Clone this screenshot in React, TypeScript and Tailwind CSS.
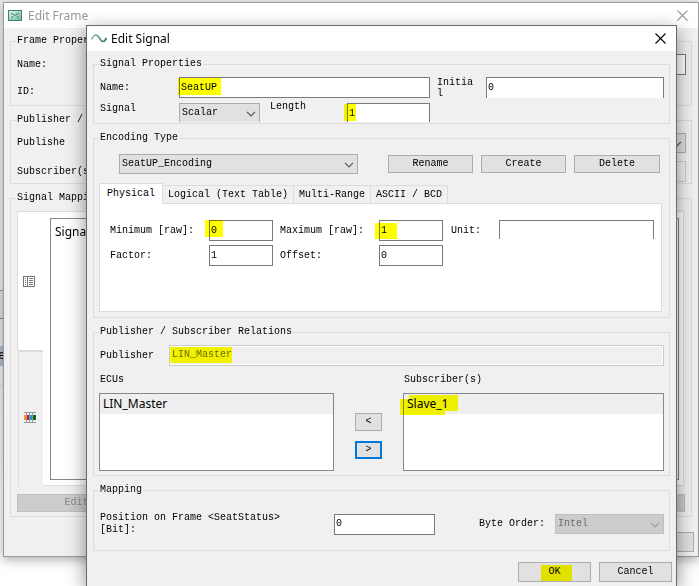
import type { ReactNode } from "react"
import clsx from "clsx"

const inputCls = "block w-full h-[21px] bg-white border border-[#7a7a7a] px-px pb-px outline-none rounded-none"
const buttonCls = "bg-[#e1e1e1] border border-[#adadad] text-center"
const uiFont = "font-['Noto_Sans',sans-serif] text-[12px]"

function Mark({ className }: { className: string }) {
  return <span className={clsx("absolute bg-[#ffff00] mix-blend-multiply pointer-events-none", className)} />
}

function CloseIcon() {
  return (
    <svg className="w-[11px] h-[11px]" viewBox="0 0 11 11" fill="none" stroke="currentColor" strokeWidth="1.1">
      <path d="M.5 .5l10 10M10.5 .5l-10 10" />
    </svg>
  )
}

function FrameIcon() {
  return (
    <svg className="w-[14px] h-[11px]" viewBox="0 0 14 11" fill="none">
      <defs>
        <linearGradient id="env" x1="0" y1="0" x2="1" y2="1">
          <stop offset="0" stopColor="#e2f6ea" />
          <stop offset="1" stopColor="#6fb89c" />
        </linearGradient>
      </defs>
      <rect x=".5" y=".5" width="13" height="10" fill="url(#env)" stroke="#3f8070" />
      <path d="M3 3l4 2.500 4-2.500M3 8.500l2-2.500M11 8.500l-2-2.500" stroke="#3c7a68" strokeWidth=".9" />
    </svg>
  )
}

function SignalIcon() {
  return (
    <svg className="w-4 h-[9px]" viewBox="0 0 16 9" fill="none">
      <defs>
        <linearGradient id="wave" x1="0" y1="0" x2="1" y2="0">
          <stop offset="0" stopColor="#86c5a2" />
          <stop offset="1" stopColor="#2f7468" />
        </linearGradient>
      </defs>
      <path d="M.5 5.500C2 2.500 3.500 1 5 1c3 0 4 6.500 7 6.500 1.500 0 2.500-1.500 3.500-3.500" stroke="url(#wave)" strokeWidth="1.700" />
    </svg>
  )
}

function TableIcon() {
  return (
    <svg className="w-3 h-[11px]" viewBox="0 0 12 11" fill="none" stroke="#777">
      <rect x=".5" y=".5" width="11" height="10" />
      <path d="M4.500 1v9" />
      <path d="M2 2.500h1M2 4.500h1M2 6.500h1M2 8.500h1M6 2.500h4M6 4.500h4M6 6.500h4M6 8.500h4" />
    </svg>
  )
}

function BitsIcon() {
  return (
    <svg className="w-3 h-[11px]" viewBox="0 0 12 11">
      <path d="M0 3h2v5H0z" fill="#f59a22" />
      <path d="M3 3h2v5H3z" fill="#d8102c" />
      <path d="M6 3h2v5H6z" fill="#1597d4" />
      <path d="M9 3h3v5H9z" fill="#0b6b12" />
      <path d="M0 .5h12M0 10.500h12M2.500 1v9M5.500 1v9M8.500 1v9" stroke="#999" />
    </svg>
  )
}

function Group({ title, className, children }: { title: string; className?: string; children: ReactNode }) {
  return (
    <fieldset className="border border-[#dcdcdc] px-[5px] min-w-0">
      <legend className="px-px leading-[14px]">{title}</legend>
      <div className={className}>{children}</div>
    </fieldset>
  )
}

function Combo({ id, value, disabled, className }: { id: string; value: string; disabled?: boolean; className?: string }) {
  return (
    <div className={clsx("relative", className)}>
      <select
        id={id}
        aria-label={id}
        disabled={disabled}
        className={clsx(
          "block appearance-none w-full h-[20px] border pl-[2px] pr-5 rounded-none opacity-100 outline-none",
          disabled ? "bg-[#cccccc] border-[#bfbfbf] text-[#6d6d6d]" : "bg-[#e1e1e1] border-[#adadad] text-black",
        )}
      >
        <option>{value}</option>
      </select>
      <svg className="absolute right-1 top-2 w-[10px] h-[6px] pointer-events-none" viewBox="0 0 10 6" fill="none">
        <path d="M1 .8l4 4 4-4" stroke={disabled ? "#a0a0a0" : "#555"} strokeWidth="1.200" />
      </svg>
    </div>
  )
}

function TitleBar({ title, icon, active }: { title: string; icon: ReactNode; active?: boolean }) {
  return (
    <div className={clsx("h-[25px] flex items-center bg-white pl-1 pr-[10px]", active ? "text-black" : "text-[#999]")}>
      <span className="w-5 flex shrink-0">{icon}</span>
      <h1 className={clsx(uiFont, "flex-1 leading-[16px]")}>{title}</h1>
      <button aria-label="Close">
        <CloseIcon />
      </button>
    </div>
  )
}

function ListBox({ label, item, children }: { label: string; item: string; children?: ReactNode }) {
  return (
    <ul aria-label={label} role="listbox" className="relative h-[78px] bg-white border border-[#828790]">
      <li role="option" aria-selected="true" className={clsx(uiFont, "h-5 bg-[#efefef] pl-[3px] leading-[20px]")}>
        {item}
      </li>
      {children}
    </ul>
  )
}

function Desktop() {
  return (
    <div className="absolute inset-0 flex flex-col bg-white">
      <div className="h-[291px] bg-[#ebebeb] border-b border-[#999]" />
      <div className="h-[27px] bg-[#dedede]" />
      <div className="h-7 bg-[#e4e4e4] border-t border-[#8a8a8a]" />
      <div className={clsx(uiFont, "h-5 bg-[#b0bccb] leading-[18px]")}>
        <span className="flex justify-end w-[5px]">e</span>
      </div>
      <div className="h-5 bg-[#eeeeee] border-b border-[#d4d4d4]" />
      <div className="flex-1 bg-gradient-to-b from-[#eeeeee] to-white" />
    </div>
  )
}

function EditFrame() {
  return (
    <section className="absolute left-[3px] right-0 top-[2px] bg-[#f0f0f0] border border-[#999] shadow-[0_3px_10px_rgba(0,0,0,0.3)]">
      <TitleBar title="Edit Frame" icon={<FrameIcon />} />
      <div className="flex flex-col gap-[7px] px-[6px] pt-[6px]">
        <Group title="Frame Properties" className="flex flex-col gap-[6px] pt-[6px] pb-[3px]">
          <div className="grid grid-cols-[80px_1fr] items-center">
            <label htmlFor="frame-name" className="pl-px">Name:</label>
            <input id="frame-name" className={inputCls} />
          </div>
          <p className="pl-px leading-[21px]">ID:</p>
        </Group>
        <Group title="Publisher / Subscriber" className="flex flex-col gap-2 pt-[6px] pb-px">
          <div className="grid grid-cols-[80px_1fr] items-center">
            <label htmlFor="frame-publisher" className="pl-px">Publishe</label>
            <Combo id="frame-publisher" value="" />
          </div>
          <div className="grid grid-cols-[80px_1fr] items-center">
            <label htmlFor="frame-subscribers" className="pl-px">Subscriber(s)</label>
            <input id="frame-subscribers" disabled className="block w-full h-[21px] bg-[#f0f0f0] border border-[#cccccc]" />
          </div>
        </Group>
        <Group title="Signal Mapping" className="pt-[6px] pb-1">
          <div className="flex h-[275px] pl-px pr-[2px]">
            <div role="tablist" className="w-[26px] flex flex-col">
              <button role="tab" aria-label="Table" className="h-[140px] bg-white border border-r-0 border-[#dcdcdc] flex items-center pl-[5px]">
                <TableIcon />
              </button>
              <button role="tab" aria-label="Layout" className="flex-1 ml-px border-l border-t border-[#dcdcdc] flex items-center pl-[5px] pb-1">
                <BitsIcon />
              </button>
            </div>
            <div className="flex-1 bg-white border border-l-0 border-[#dcdcdc] pt-[6px] pb-[5px] pl-[7px] pr-1">
              <div className={clsx(uiFont, "h-full border border-[#828790] pl-1 pt-1 leading-[18px]")}>Signal</div>
            </div>
          </div>
          <div className="grid grid-cols-4 gap-2 pt-2 pl-px pr-px text-[#8a8a8a]">
            <button disabled className="h-[18px] bg-[#cccccc] border border-[#bfbfbf]">Edit Signal</button>
            <button disabled aria-label="Add" className="h-[18px] bg-[#cccccc] border border-[#bfbfbf]" />
            <button disabled aria-label="Remove" className="h-[18px] bg-[#cccccc] border border-[#bfbfbf]" />
            <button disabled aria-label="Clear" className="h-[18px] bg-[#cccccc] border border-[#bfbfbf]" />
          </div>
        </Group>
      </div>
      <div className="flex justify-end pt-[15px] pb-1 pr-1">
        <button aria-label="Cancel" className={clsx(buttonCls, "w-[73px] h-[20px]")} />
      </div>
    </section>
  )
}

function SignalProperties() {
  return (
    <Group title="Signal Properties" className="grid grid-cols-[80px_minmax(0,251fr)_56px_minmax(0,178fr)] grid-rows-[21px_19px] gap-y-[5px] pt-[6px] pb-px">
      <label htmlFor="name" className="self-center pl-px">Name:</label>
      <div className="relative">
        <input id="name" defaultValue="SeatUP" className={inputCls} />
        <Mark className="-left-px top-px w-[43px] h-[17px]" />
      </div>
      <label htmlFor="initial" className="w-[46px] pl-[7px] leading-[11px] break-all self-center">Initial</label>
      <input id="initial" defaultValue="0" className={clsx(inputCls, "border-b-0")} />

      <label htmlFor="signal-type" className="pl-px">Signal</label>
      <div className="flex">
        <div className="w-[81px] h-[19px] overflow-hidden">
          <Combo id="signal-type" value="Scalar" />
        </div>
        <label htmlFor="length" className="flex-1 pl-[10px] leading-[8px]">Length</label>
        <div className="relative w-[83px]">
          <div className="h-[19px] overflow-hidden">
            <input id="length" defaultValue="1" className={inputCls} />
          </div>
          <Mark className="-left-[3px] top-px w-3 h-[17px]" />
        </div>
      </div>
    </Group>
  )
}

function EncodingType() {
  const tabs = ["Logical (Text Table)", "Multi-Range", "ASCII / BCD"]

  return (
    <Group title="Encoding Type" className="pt-[9px] pb-[5px]">
      <div className="flex items-center gap-2 pl-5 pr-1">
        <Combo id="encoding" value="SeatUP_Encoding" className="flex-1 mr-[22px]" />
        <button className={clsx(buttonCls, "w-[85px] h-[18px]")}>Rename</button>
        <button className={clsx(buttonCls, "w-[85px] h-[18px]")}>Create</button>
        <button className={clsx(buttonCls, "w-[86px] h-[18px]")}>Delete</button>
      </div>
      <div className="pt-[9px] pr-[2px]">
        <div role="tablist" className="flex items-end">
          <button role="tab" aria-selected="true" className="relative z-10 -mb-px h-[21px] bg-white border border-b-0 border-[#dcdcdc] px-[7px]">
            Physical
          </button>
          {tabs.map((t) => (
            <button key={t} role="tab" className="h-[18px] border-t border-r border-[#dcdcdc] pl-[5px] pr-[5px]">
              {t}
            </button>
          ))}
        </div>
        <div className="grid grid-cols-[99px_64px_106px_64px_56px_minmax(0,1fr)] gap-y-1 items-center h-[109px] content-start bg-white border border-[#dcdcdc] pt-4 pl-[10px] pr-[7px]">
          <label htmlFor="min">Minimum [raw]:</label>
          <div className="relative">
            <input id="min" defaultValue="0" className={inputCls} />
            <Mark className="-left-1 top-0 w-[18px] h-[17px]" />
          </div>
          <label htmlFor="max" className="pl-[7px]">Maximum [raw]:</label>
          <div className="relative">
            <input id="max" defaultValue="1" className={inputCls} />
            <Mark className="-left-1 top-[3px] w-[22px] h-4" />
          </div>
          <label htmlFor="unit" className="pl-2">Unit:</label>
          <div className="h-[21px] pb-[2px]">
            <input id="unit" className="block w-full h-full bg-white border border-b-0 border-[#7a7a7a]" />
          </div>
          <label htmlFor="factor">Factor:</label>
          <input id="factor" defaultValue="1" className={inputCls} />
          <label htmlFor="offset" className="pl-[7px]">Offset:</label>
          <input id="offset" defaultValue="0" className={inputCls} />
        </div>
      </div>
    </Group>
  )
}

function Relations() {
  return (
    <Group title="Publisher / Subscriber Relations" className="pt-[6px] pb-1">
      <div className="flex items-center">
        <label htmlFor="publisher" className="w-[70px] pl-px">Publisher</label>
        <div className="relative flex-1">
          <input
            id="publisher"
            disabled
            defaultValue="LIN_Master"
            className="block w-full h-[21px] bg-[#f0f0f0] border border-[#cccccc] shadow-[inset_0_0_0_1px_#fff] px-[2px] pb-[2px] text-[#6d6d6d]"
          />
          <Mark className="left-px top-[2px] w-[62px] h-4" />
        </div>
      </div>
      <div className="grid grid-cols-[minmax(0,235fr)_69px_minmax(0,261fr)]">
        <p className="pl-px leading-[27px]">ECUs</p>
        <p className="col-start-3 pl-px leading-[27px]">Subscriber(s)</p>
        <ListBox label="ECUs" item="LIN_Master" />
        <div className="flex flex-col items-center gap-[10px] pt-5">
          <button className={clsx(buttonCls, "w-[27px] h-[18px]")}>&lt;</button>
          <button className="w-[27px] h-[18px] bg-[#e1e1e1] border-2 border-[#0078d7] leading-[14px]">&gt;</button>
        </div>
        <ListBox label="Subscriber(s)" item="Slave_1">
          <Mark className="left-[5px] top-px w-[49px] h-4" />
          <Mark className="-left-1 top-[5px] w-[45px] h-4" />
        </ListBox>
      </div>
    </Group>
  )
}

function EditSignal() {
  return (
    <section className="absolute left-[86px] right-[22px] top-[25px] bottom-0 bg-[#f0f0f0] border border-b-0 border-[#6a6a6a] shadow-[0_6px_18px_rgba(0,0,0,0.45)]">
      <TitleBar title="Edit Signal" icon={<SignalIcon />} active />
      <div className="flex flex-col gap-[7px] px-[6px] pt-[6px]">
        <SignalProperties />
        <EncodingType />
        <Relations />
        <Group title="Mapping" className="flex items-center pt-[15px] pb-[14px]">
          <label htmlFor="position" className="w-[235px] pl-px">
            Position on Frame &lt;SeatStatus&gt;
            <br />
            [Bit]:
          </label>
          <div className="w-[101px]">
            <input id="position" defaultValue="0" className={inputCls} />
          </div>
          <label htmlFor="byte-order" className="flex-1 pr-[10px] text-right">Byte Order:</label>
          <Combo id="byte-order" value="Intel" disabled className="w-[109px]" />
        </Group>
      </div>
      <div className="flex justify-end gap-2 pt-[11px] pr-1">
        <button className={clsx(buttonCls, "relative w-[73px] h-[20px]")}>
          OK
          <Mark className="left-[22px] top-[2px] w-[31px] h-4" />
        </button>
        <button className={clsx(buttonCls, "w-[73px] h-[20px]")}>Cancel</button>
      </div>
    </section>
  )
}

export default function App() {
  return (
    <main className="relative h-screen overflow-hidden bg-white text-black font-['Liberation_Mono',monospace] text-[10px] leading-[12px]">
      <Desktop />
      <EditFrame />
      <EditSignal />
    </main>
  )
}
